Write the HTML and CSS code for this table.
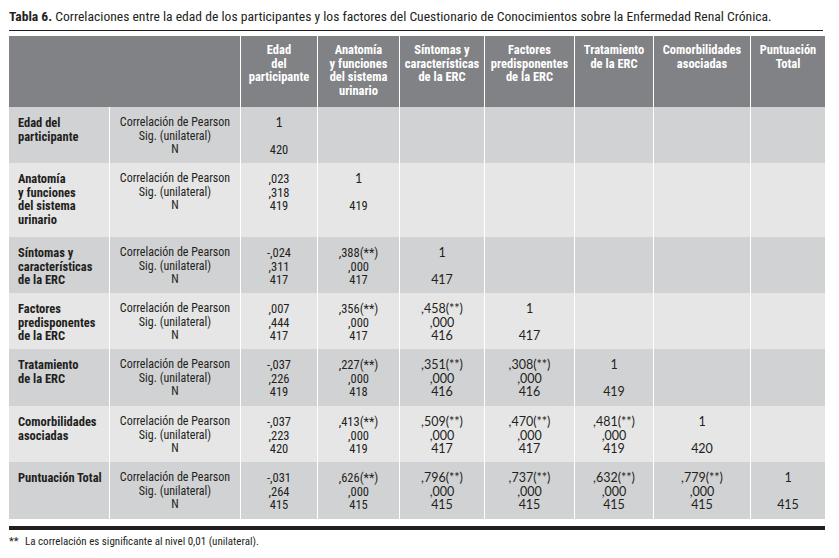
FILE: index.html
```html
<!DOCTYPE html>
<html lang="es">
<head>
<meta charset="utf-8">
<title>Tabla 6</title>
<link rel="stylesheet" href="styles.css">
</head>
<body>
<div class="page">
  <h1 class="caption"><b>Tabla 6.</b> Correlaciones entre la edad de los participantes y los factores del Cuestionario de Conocimientos sobre la Enfermedad Renal Crónica.</h1>
  <table class="corr">
    <colgroup>
      <col class="c1"><col class="c2"><col class="c3"><col class="c4"><col class="c5"><col class="c6"><col class="c7"><col class="c8"><col class="c9">
    </colgroup>
    <thead>
      <tr class="head">
        <th colspan="2"></th>
        <th>Edad<br>del<br>participante</th>
        <th>Anatomía<br>y funciones<br>del sistema<br>urinario</th>
        <th>Síntomas y<br>características<br>de la ERC</th>
        <th>Factores<br>predisponentes<br>de la ERC</th>
        <th>Tratamiento<br>de la ERC</th>
        <th>Comorbilidades<br>asociadas</th>
        <th>Puntuación<br>Total</th>
      </tr>
    </thead>
    <tbody>
      <tr class="dark h56">
        <th class="lbl">Edad del<br>participante</th>
        <td class="stat">Correlación de Pearson<br>Sig. (unilateral)<br>N</td>
        <td class="v"><span class="one">1</span><br>&nbsp;<br>420</td>
        <td></td><td></td><td></td><td></td><td></td><td></td>
      </tr>
      <tr class="light h74">
        <th class="lbl">Anatomía<br>y funciones<br>del sistema<br>urinario</th>
        <td class="stat">Correlación de Pearson<br>Sig. (unilateral)<br>N</td>
        <td class="v">,023<br>,318<br>419</td>
        <td class="v"><span class="one">1</span><br>&nbsp;<br>419</td>
        <td></td><td></td><td></td><td></td><td></td>
      </tr>
      <tr class="dark h56">
        <th class="lbl">Síntomas y<br>características<br>de la ERC</th>
        <td class="stat">Correlación de Pearson<br>Sig. (unilateral)<br>N</td>
        <td class="v">-,024<br>,311<br>417</td>
        <td class="v">,388(**)<br>,000<br>417</td>
        <td class="v n">1<br>&nbsp;<br>417</td>
        <td></td><td></td><td></td><td></td>
      </tr>
      <tr class="light h56">
        <th class="lbl">Factores<br>predisponentes<br>de la ERC</th>
        <td class="stat">Correlación de Pearson<br>Sig. (unilateral)<br>N</td>
        <td class="v">,007<br>,444<br>417</td>
        <td class="v">,356(**)<br>,000<br>417</td>
        <td class="v n">,458(**)<br>,000<br>416</td>
        <td class="v n">1<br>&nbsp;<br>417</td>
        <td></td><td></td><td></td>
      </tr>
      <tr class="dark h57">
        <th class="lbl">Tratamiento<br>de la ERC</th>
        <td class="stat">Correlación de Pearson<br>Sig. (unilateral)<br>N</td>
        <td class="v">-,037<br>,226<br>419</td>
        <td class="v">,227(**)<br>,000<br>418</td>
        <td class="v n">,351(**)<br>,000<br>416</td>
        <td class="v n">,308(**)<br>,000<br>416</td>
        <td class="v n">1<br>&nbsp;<br>419</td>
        <td></td><td></td>
      </tr>
      <tr class="light h56">
        <th class="lbl">Comorbilidades<br>asociadas</th>
        <td class="stat">Correlación de Pearson<br>Sig. (unilateral)<br>N</td>
        <td class="v">-,037<br>,223<br>420</td>
        <td class="v">,413(**)<br>,000<br>419</td>
        <td class="v n">,509(**)<br>,000<br>417</td>
        <td class="v n">,470(**)<br>,000<br>417</td>
        <td class="v n">,481(**)<br>,000<br>419</td>
        <td class="v n">1<br>&nbsp;<br>420</td>
        <td></td>
      </tr>
      <tr class="dark h57">
        <th class="lbl">Puntuación Total</th>
        <td class="stat">Correlación de Pearson<br>Sig. (unilateral)<br>N</td>
        <td class="v">-,031<br>,264<br>415</td>
        <td class="v">,626(**)<br>,000<br>415</td>
        <td class="v n">,796(**)<br>,000<br>415</td>
        <td class="v n">,737(**)<br>,000<br>415</td>
        <td class="v n">,632(**)<br>,000<br>415</td>
        <td class="v n">,779(**)<br>,000<br>415</td>
        <td class="v n">1<br>&nbsp;<br>415</td>
      </tr>
    </tbody>
  </table>
  <div class="rule"></div>
  <p class="note"><span class="stars">**</span>La correlación es significante al nivel 0,01 (unilateral).</p>
</div>
</body>
</html>
```
FILE: styles.css
```css
html, body {
  margin: 0;
  padding: 0;
  background: #ffffff;
}

.page {
  padding: 8px 14px 0 9px;
  font-family: "Roboto", "Open Sans", sans-serif;
  font-stretch: 75%;
  color: #231f20;
}

.caption {
  margin: 0 2px 0 0;
  padding: 0 0 6px 0;
  font-size: 13.6px;
  font-weight: normal;
  line-height: 16px;
  border-bottom: 1px solid #231f20;
  white-space: nowrap;
}

.caption b {
  font-weight: bold;
}

.corr {
  margin-top: 5px;
  width: 816px;
  table-layout: fixed;
  border-collapse: separate;
  border-spacing: 0;
  font-size: 12.5px;
  line-height: 13.5px;
}

.c1 { width: 100px; }
.c2 { width: 131px; }
.c3 { width: 77px; }
.c4 { width: 82px; }
.c5 { width: 85px; }
.c6 { width: 90px; }
.c7 { width: 79px; }
.c8 { width: 97px; }
.c9 { width: 75px; }

.corr th,
.corr td {
  padding: 9px 1px 0 1px;
  vertical-align: top;
  text-align: center;
  border-left: 1px solid #ffffff;
  white-space: nowrap;
}

.corr tr > :first-child {
  border-left: 0;
}

.head {
  height: 71px;
  background: #818285;
  color: #ffffff;
}

.head th {
  padding-top: 7px;
  font-weight: bold;
}

.dark { background: #d1d2d4; }
.light { background: #e6e6e7; }

.h56 { height: 56px; }
.h57 { height: 57px; }
.h74 { height: 74px; }

.corr .lbl {
  text-align: left;
  padding-left: 9px;
  font-weight: bold;
}

.corr .stat {
  font-size: 12px;
}

.n,
.one {
  font-family: "Lato", "Open Sans", sans-serif;
  font-stretch: normal;
  font-size: 12.5px;
}

.rule {
  margin-top: 7px;
  width: 816px;
  height: 4px;
  background: #231f20;
}

.note {
  margin: 6px 0 0 0;
  font-size: 11px;
  line-height: 12px;
  color: #231f20;
}

.stars {
  display: inline-block;
  width: 16px;
}
```
